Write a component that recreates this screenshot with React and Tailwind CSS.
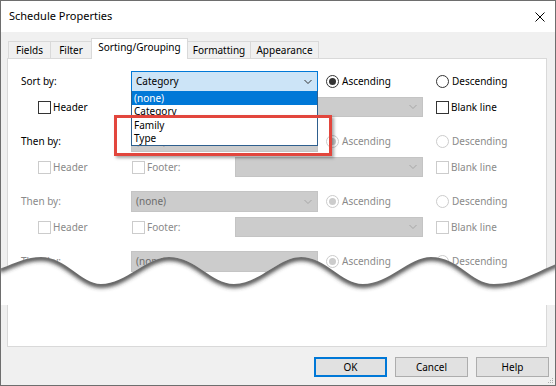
import React from 'react';

const font = "font-['Noto_Sans',sans-serif]";

function Check({ label, disabled }) {
  return (
    <div className="flex items-center">
      <span className={`w-[13px] h-[13px] border bg-white ${disabled ? 'border-[#cccccc]' : 'border-[#333333]'}`} />
      <span className={`ml-[2px] ${disabled ? 'text-[#8a8a8a]' : 'text-black'}`}>{label}</span>
    </div>
  );
}

function Radio({ label, checked, disabled }) {
  return (
    <div className="flex items-center">
      <span className={`w-[13px] h-[13px] rounded-full border bg-white flex items-center justify-center ${disabled ? 'border-[#cccccc]' : 'border-[#333333]'}`}>
        {checked && <span className={`w-[7px] h-[7px] rounded-full ${disabled ? 'bg-[#cccccc]' : 'bg-[#333333]'}`} />}
      </span>
      <span className={`ml-[3px] ${disabled ? 'text-[#8a8a8a]' : 'text-black'}`}>{label}</span>
    </div>
  );
}

function Chevron({ color }) {
  return (
    <svg className="absolute right-[5px] top-1/2 -translate-y-1/2" width="8" height="5" viewBox="0 0 8 5">
      <path d="M0.5 0.5 L4 4 L7.5 0.5" fill="none" stroke={color} strokeWidth="1" />
    </svg>
  );
}

function Combo({ value, focused, className = '', children }) {
  return (
    <div
      className={`relative h-full flex items-center border pl-[4px] ${
        focused ? 'bg-[#cce4f7] border-[#0078d7] text-black' : 'bg-[#cccccc] border-[#c4c4c4] text-[#6d6d6d]'
      } ${className}`}
    >
      <span>{value}</span>
      <Chevron color={focused ? '#333333' : '#a6a6a6'} />
      {children}
    </div>
  );
}

// 정렬 그룹 (Sort by / Then by)
function SortGroup({ label, labelDisabled, enabled, open, partial }) {
  const off = !enabled;
  return (
    <div className="flex flex-col">
      <div className="flex items-center h-[21px]">
        <div className={`w-[123px] pl-[13px] ${labelDisabled ? 'text-[#8a8a8a]' : 'text-black'}`}>{label}</div>
        <Combo value={enabled ? 'Category' : '(none)'} focused={enabled} className="w-[187px]">
          {open && (
            <div className="absolute left-[-1px] top-full w-[187px] bg-white border-x border-b border-[#2e5f8e] z-20 text-black">
              <div className="h-[14px] leading-[14px] pl-[2px] bg-[#0078d7] text-white">(none)</div>
              <div className="h-[13px] leading-[13px] pl-[2px]">Category</div>
              <div className="h-[14px] leading-[14px] pl-[2px]">Family</div>
              <div className="h-[13px] leading-[13px] pl-[2px]">Type</div>
            </div>
          )}
        </Combo>
        <div className="w-[8px]" />
        <div className="w-[110px]">
          <Radio label="Ascending" checked disabled={off} />
        </div>
        <Radio label="Descending" disabled={off} />
      </div>
      {!partial && (
        <div className="flex items-center h-[20px] mt-[5px]">
          <div className="w-[123px] pl-[30px]">
            <Check label="Header" disabled={off} />
          </div>
          {/* 드롭다운 목록에 가려지는 Footer 체크박스 */}
          <div className={`w-[104px] pl-[1px] ${open ? 'invisible' : ''}`}>
            <Check label="Footer:" disabled />
          </div>
          <Combo value="" className="w-[188px]" />
          <div className="w-[13px]" />
          <Check label="Blank line" disabled={off} />
        </div>
      )}
    </div>
  );
}

function Tab({ label, active, w }) {
  return (
    <div
      className={`flex items-center justify-center border-t border-x border-[#d9d9d9] -ml-px first:ml-0 ${w} ${
        active ? 'h-[21px] bg-white relative z-10 -mb-px pb-[3px]' : 'h-[17px] bg-[#f0f0f0]'
      }`}
    >
      {label}
    </div>
  );
}

function Button({ label, primary }) {
  return (
    <button
      className={`w-[73px] h-[20px] bg-[#e1e1e1] flex items-center justify-center text-black ${
        primary ? 'border-2 border-[#0078d7]' : 'border border-[#adadad]'
      }`}
    >
      {label}
    </button>
  );
}

export default function App() {
  const wave =
    'M-2 268 C 15 262 25 256 40 256 C 65 256 80 283 100 283 C 125 283 145 256 168 256 C 195 256 210 283 233 283 C 258 283 278 256 300 256 C 325 256 340 283 362 283 C 388 283 408 256 430 256 C 458 256 470 283 493 283 C 520 283 540 268 558 262';

  return (
    <div className={`relative w-[556px] h-[386px] overflow-hidden bg-[#f0f0f0] border border-[#6e6e6e] text-[10px] ${font}`}>
      {/* 타이틀 바 */}
      <div className="h-[31px] bg-white flex items-center justify-between pl-[8px] pr-[10px]">
        <span className="text-[11px] text-black">Schedule Properties</span>
        <svg width="10" height="10" viewBox="0 0 10 10">
          <path d="M0.5 0.5 L9.5 9.5 M9.5 0.5 L0.5 9.5" stroke="#000" strokeWidth="1" />
        </svg>
      </div>

      {/* 탭 */}
      <div className="h-[26px] flex items-end pl-[7px]">
        <Tab label="Fields" w="w-[43px]" />
        <Tab label="Filter" w="w-[42px]" />
        <Tab label="Sorting/Grouping" active w="w-[97px]" />
        <Tab label="Formatting" w="w-[64px]" />
        <Tab label="Appearance" w="w-[69px]" />
      </div>

      {/* 탭 패널 */}
      <div className="ml-[6px] w-[540px] h-[289px] bg-white border border-[#d9d9d9] overflow-hidden pt-[12px] flex flex-col gap-[14px]">
        <SortGroup label="Sort by:" enabled open />
        <SortGroup label="Then by:" />
        <SortGroup label="Then by:" labelDisabled />
        <SortGroup label="Then by:" labelDisabled partial />
      </div>

      {/* 하단 버튼 */}
      <div className="flex justify-end gap-[8px] pr-[6px] pt-[10px]">
        <Button label="OK" primary />
        <Button label="Cancel" />
        <Button label="Help" />
      </div>

      {/* 빨간 강조 박스 */}
      <div className="absolute left-[113px] top-[114px] w-[218px] h-[41px] border-[3px] border-[#e2463d] shadow-[2px_2px_3px_rgba(0,0,0,0.35)] z-30" />

      {/* 찢어진 종이 효과 */}
      <svg className="absolute left-0 top-[240px] z-40" width="556" height="66" viewBox="0 240 556 66">
        <defs>
          <clipPath id="gap">
            <path d={`${wave} L558 304 L-2 304 Z`} />
          </clipPath>
          <filter id="blur" x="-10%" y="-50%" width="120%" height="200%">
            <feGaussianBlur stdDeviation="2.2" />
          </filter>
        </defs>
        <path d={`${wave} L558 304 L-2 304 Z`} fill="#ffffff" />
        <g clipPath="url(#gap)">
          <path d={wave} fill="none" stroke="#3a3a3a" strokeWidth="5" filter="url(#blur)" transform="translate(0 1)" />
        </g>
      </svg>

      {/* 크기 조절 그립 */}
      <svg className="absolute right-[1px] bottom-[1px]" width="7" height="7" viewBox="0 0 7 7">
        <rect x="5" y="1" width="1" height="1" fill="#b0b0b0" />
        <rect x="3" y="3" width="1" height="1" fill="#b0b0b0" />
        <rect x="5" y="3" width="1" height="1" fill="#b0b0b0" />
        <rect x="1" y="5" width="1" height="1" fill="#b0b0b0" />
        <rect x="3" y="5" width="1" height="1" fill="#b0b0b0" />
        <rect x="5" y="5" width="1" height="1" fill="#b0b0b0" />
      </svg>
    </div>
  );
}
